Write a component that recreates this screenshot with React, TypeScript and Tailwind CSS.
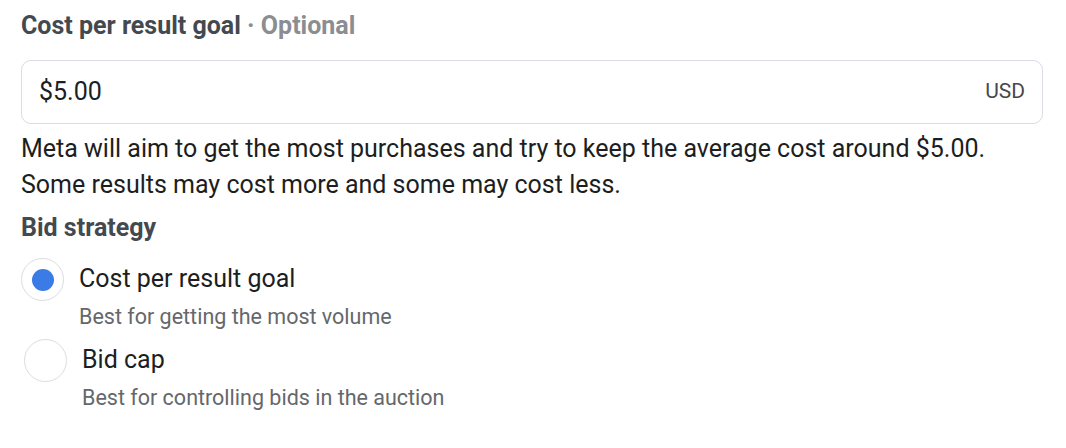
import React, { useState } from 'react';

const options = [
  { id: 'cost', label: 'Cost per result goal', hint: 'Best for getting the most volume' },
  { id: 'cap', label: 'Bid cap', hint: 'Best for controlling bids in the auction' },
];

const App: React.FC = () => {
  const [selected, setSelected] = useState('cost');

  return (
    <div className="w-[1066px] h-[448px] bg-white px-[21px] pt-[10px] font-['Roboto',sans-serif] text-[#1c1e21]">
      <div className="text-[25px] font-bold text-[#444950] leading-[32px]">
        Cost per result goal <span className="text-[#8a8d91]">· Optional</span>
      </div>

      <div className="mt-[18px] w-[1022px] h-[64px] border border-[#dadde1] rounded-[10px] flex items-center justify-between pl-[17px] pr-[17px]">
        <span className="text-[25px]">$5.00</span>
        <span className="text-[21px] text-[#444950]">USD</span>
      </div>

      <p className="mt-[7px] text-[25px] leading-[36px]">
        Meta will aim to get the most purchases and try to keep the average cost around $5.00.
        <br />
        Some results may cost more and some may cost less.
      </p>

      <div className="mt-[9px] text-[25px] font-bold text-[#444950] leading-[32px]">Bid strategy</div>

      <div className="mt-[14px] flex flex-col">
        {options.map((o, i) => (
          <div
            key={o.id}
            className={`flex cursor-pointer ${i === 1 ? 'pl-[3px] mt-[9px]' : ''}`}
            onClick={() => setSelected(o.id)}
          >
            <div className="w-[43px] h-[43px] rounded-full border border-[#dadde1] flex items-center justify-center shrink-0">
              {selected === o.id && <div className="w-[22px] h-[22px] rounded-full bg-[#3b7be6]" />}
            </div>
            <div className="ml-[15px]">
              <div className="text-[25px] leading-[42px]">{o.label}</div>
              <div className="text-[21.5px] leading-[26px] text-[#65676b] mt-[4px]">{o.hint}</div>
            </div>
          </div>
        ))}
      </div>
    </div>
  );
};

export default App;
